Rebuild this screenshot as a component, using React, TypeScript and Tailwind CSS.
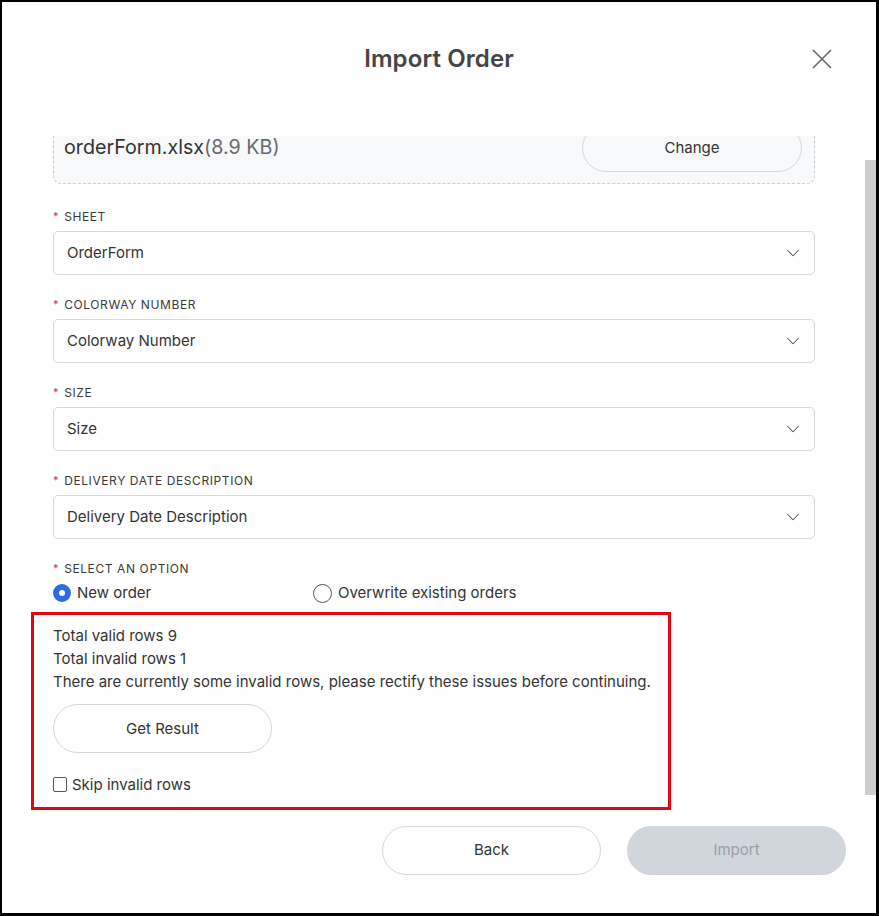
import React from 'react';
import { ChevronDown } from 'lucide-react';

const fields = [
  { label: 'Sheet', value: 'OrderForm' },
  { label: 'Colorway Number', value: 'Colorway Number' },
  { label: 'Size', value: 'Size' },
  { label: 'Delivery Date Description', value: 'Delivery Date Description' },
];

const FieldLabel: React.FC<{ children: React.ReactNode }> = ({ children }) => (
  <div className="flex items-center h-[16px] pt-[1px] text-[12px] tracking-[0.6px] uppercase text-[#3a3a3a]">
    <span className="text-[#e0303a] mr-[5px] text-[11px]">*</span>
    {children}
  </div>
);

const SelectBox: React.FC<{ value: string }> = ({ value }) => (
  <div className="mt-[7px] h-[44px] flex items-center justify-between border border-[#d7dae0] rounded-[5px] pl-[13px] pr-[10px] bg-white">
    <span className="text-[15px] text-[#333]">{value}</span>
    <ChevronDown size={22} strokeWidth={1.1} className="text-[#555]" />
  </div>
);

export default function App() {
  return (
    <div
      className="w-[879px] h-[916px] bg-white border-l-2 border-t-2 border-r-[3px] border-b-[3px] border-black flex flex-col overflow-hidden"
      style={{ fontFamily: 'Inter, "Noto Sans", sans-serif' }}
    >
      {/* header */}
      <div className="relative h-[134px] shrink-0 pt-[42px] text-center">
        <h1 className="text-[24px] leading-[30px] font-semibold tracking-[0.1px] text-[#454545]">Import Order</h1>
        <button className="absolute right-[44px] top-[47px] p-0">
          <svg width="20" height="20" viewBox="0 0 20 20" className="text-[#666]">
            <path d="M1 1 L19 19 M19 1 L1 19" stroke="currentColor" strokeWidth="1.6" fill="none" />
          </svg>
        </button>
      </div>

      {/* scroll area */}
      <div className="flex h-[676px] shrink-0 overflow-hidden">
        <div className="flex-1 pl-[51px] pr-[50px]">
          <div className="-mt-[24px] h-[72px] flex items-center justify-between border border-dashed border-[#c9ccd2] rounded-[8px] bg-[#f8f9fb] pl-[10px] pr-[12px]">
            <div className="text-[19.7px] text-[#333]">
              orderForm.xlsx<span className="text-[#6b6b6b]">(8.9 KB)</span>
            </div>
            <button className="w-[220px] h-[48px] rounded-full border border-[#d3d6dc] bg-[#f8f9fb] text-[15px] text-[#333]">
              Change
            </button>
          </div>

          <div className="mt-[24px] flex flex-col gap-[21px]">
            {fields.map((f) => (
              <div key={f.label}>
                <FieldLabel>{f.label}</FieldLabel>
                <SelectBox value={f.value} />
              </div>
            ))}
            <div>
              <FieldLabel>Select an option</FieldLabel>
              <div className="mt-[8px] flex items-center h-[18px] text-[15px] text-[#333]">
                <label className="flex items-center w-[260px]">
                  <span className="w-[18px] h-[18px] rounded-full border-[6px] border-[#2f6ae6] bg-white" />
                  <span className="ml-[6px]">New order</span>
                </label>
                <label className="flex items-center">
                  <span className="w-[19px] h-[19px] rounded-full border border-[#555] bg-white" />
                  <span className="ml-[6px]">Overwrite existing orders</span>
                </label>
              </div>
            </div>
          </div>

          <div className="mt-[10px] -ml-[22px] w-[640px] border-[3px] border-[#e30613] pl-[19px] pt-[9px] pb-[13px] text-[15px] leading-[23px] text-[#333]">
            <div>Total valid rows 9</div>
            <div>Total invalid rows 1</div>
            <div>There are currently some invalid rows, please rectify these issues before continuing.</div>
            <button className="mt-[11px] w-[219px] h-[49px] rounded-full border border-[#d3d6dc] bg-white text-[15px] text-[#333]">
              Get Result
            </button>
            <label className="mt-[21px] flex items-center h-[20px]">
              <span className="w-[14px] h-[15px] border border-[#555] rounded-[2px] bg-white" />
              <span className="ml-[5px]">Skip invalid rows</span>
            </label>
          </div>
        </div>
        <div className="w-[11px] shrink-0">
          <div className="mt-[24px] h-[635px] bg-[#cdcdcd]" />
        </div>
      </div>

      {/* footer */}
      <div className="flex justify-end gap-[26px] pt-[14px] pr-[30px]">
        <button className="w-[219px] h-[49px] rounded-full border border-[#d3d6dc] bg-white text-[15px] text-[#333]">
          Back
        </button>
        <button className="w-[219px] h-[49px] rounded-full bg-[#d1d5dc] text-[15px] text-[#999ea6]">
          Import
        </button>
      </div>
    </div>
  );
}
